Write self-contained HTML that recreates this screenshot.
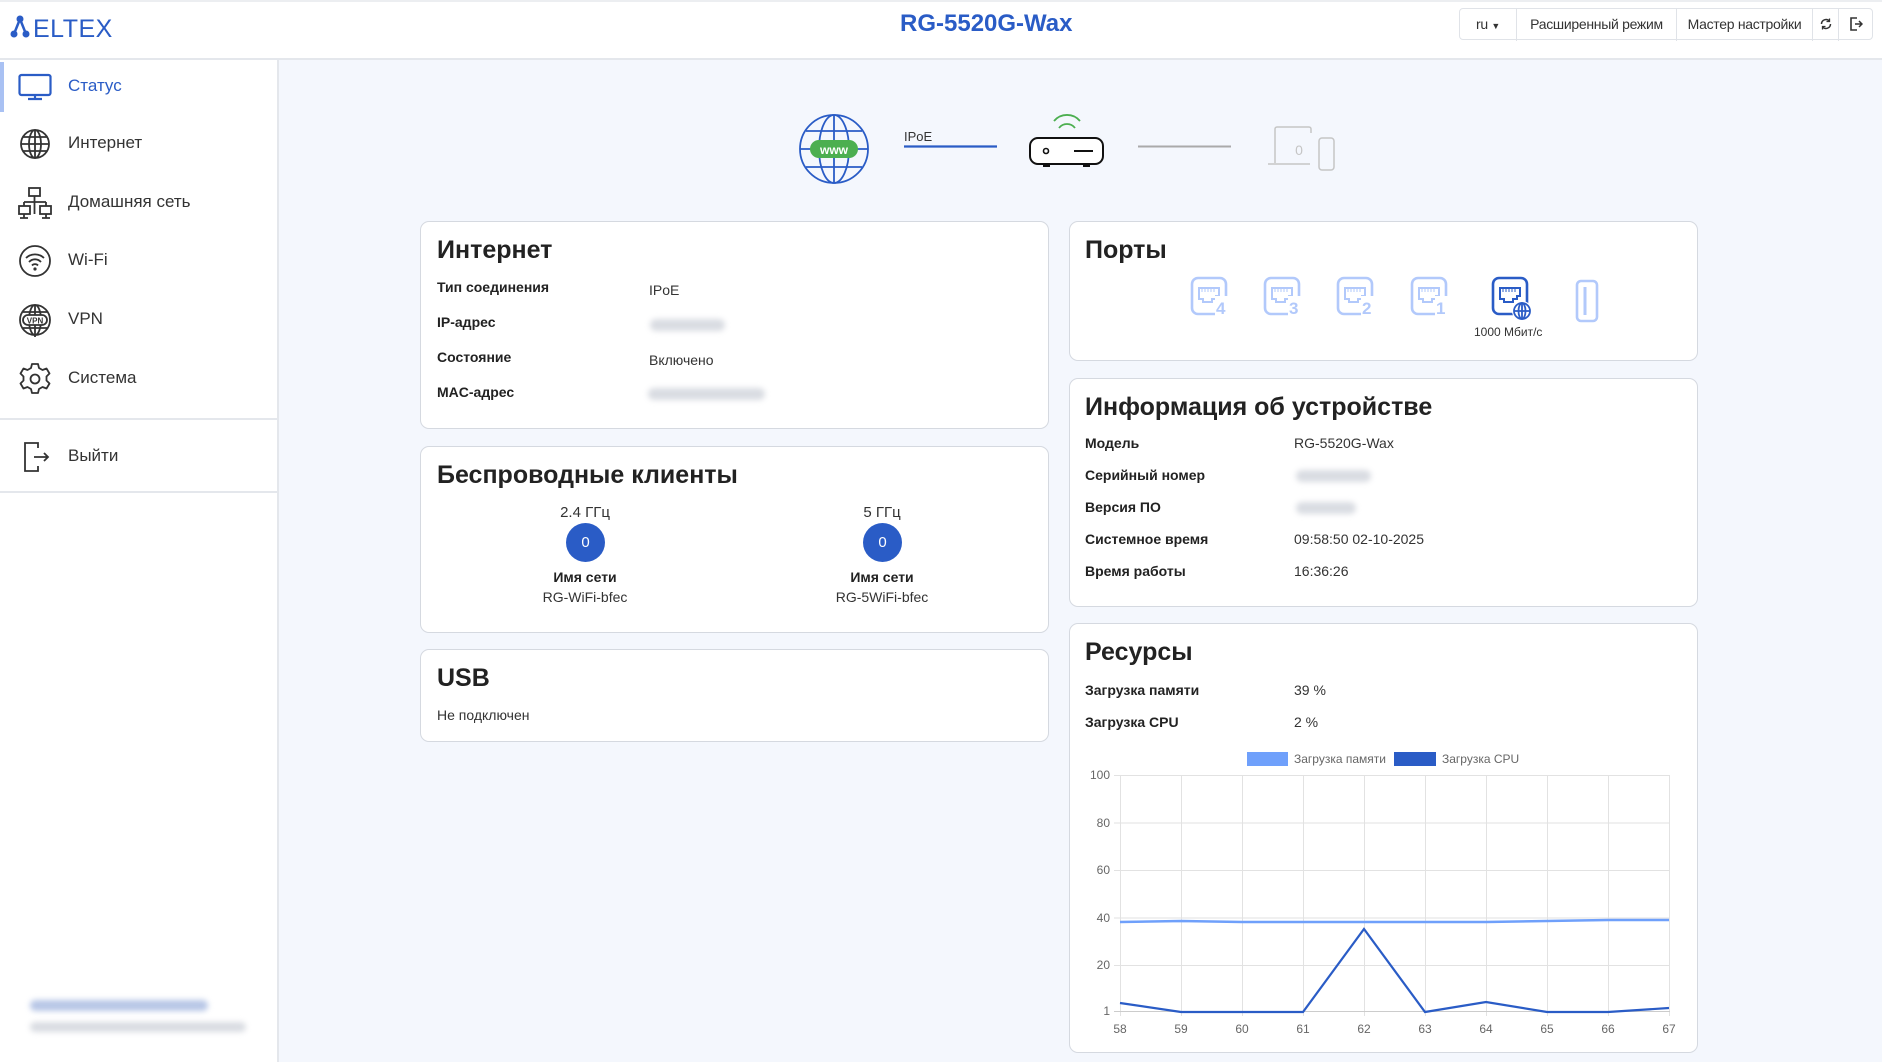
<!DOCTYPE html>
<html><head><meta charset="utf-8"><style>
*{margin:0;padding:0;box-sizing:border-box}
body{width:1882px;height:1062px;overflow:hidden;background:#f4f7fd;font-family:"Liberation Sans","DejaVu Sans",sans-serif;color:#222;position:relative}
.a{position:absolute;white-space:nowrap}
.hdr{position:absolute;left:0;top:0;width:1882px;height:60px;background:#fff;border-bottom:2px solid #e4e7ec;border-top:2px solid #eceef1}
.side{position:absolute;left:0;top:60px;width:279px;height:1002px;background:#fff;border-right:2px solid #e4e7ec}
.mi{position:absolute;left:68px;font-size:17px;color:#333}
.card{position:absolute;background:#fff;border:1.5px solid #d5d9e0;border-radius:9px}
.t{position:absolute;font-size:25px;font-weight:bold;color:#222}
.l{position:absolute;font-size:14px;font-weight:bold;color:#222}
.v{position:absolute;font-size:14px;color:#333}
.blur{position:absolute;height:12px;background:#d9dce2;border-radius:6px;filter:blur(3px)}
.btn{position:absolute;top:0;height:32px;line-height:30px;font-size:14px;letter-spacing:-0.3px;color:#333;border-left:1px solid #e0e3e8;text-align:center}
</style></head><body>
<div class="hdr"></div>
<!-- logo -->
<svg class="a" style="left:10px;top:12px" width="110" height="28" viewBox="0 0 110 28">
<circle cx="4" cy="22" r="3.5" fill="#2a5cc6"/><circle cx="10" cy="7" r="3.5" fill="#2a5cc6"/><circle cx="16" cy="22" r="3.5" fill="#2a5cc6"/>
<path d="M4 22L10 7L16 22" stroke="#2a5cc6" stroke-width="2.5" fill="none"/>
<text x="23" y="25" font-family="Liberation Sans" font-size="25" fill="#2a5cc6" letter-spacing="0.5">ELTEX</text>
</svg>
<div class="a" style="left:900px;top:10px;font-size:24px;font-weight:bold;color:#2a5cc6;width:170px;text-align:center">RG-5520G-Wax</div>
<div class="a" style="left:1459px;top:8px;width:414px;height:32px;border:1px solid #e0e3e8;border-radius:4px;background:#fff">
<div class="btn" style="left:0;width:56px;border-left:none">ru <span style="font-size:9px">▼</span></div>
<div class="btn" style="left:56px;width:160px">Расширенный режим</div>
<div class="btn" style="left:216px;width:136px">Мастер настройки</div>
<div class="btn" style="left:352px;width:26px"><svg width="14" height="14" viewBox="0 0 14 14" style="margin-top:8px"><path d="M2.5 7a4.5 4.5 0 0 1 8-2.8M11.5 7a4.5 4.5 0 0 1-8 2.8" stroke="#333" stroke-width="1.5" fill="none"/><path d="M10.5 1.5v3h-3M3.5 12.5v-3h3" stroke="#333" stroke-width="1.3" fill="none"/></svg></div>
<div class="btn" style="left:378px;width:34px"><svg width="14" height="16" viewBox="0 0 14 16" style="margin-top:7px"><path d="M8 2H2v12h6" stroke="#333" stroke-width="1.6" fill="none"/><path d="M6 8h7M10 5l3 3-3 3" stroke="#333" stroke-width="1.5" fill="none"/></svg></div>
</div>

<div class="side"></div>
<div class="a" style="left:0;top:62px;width:4px;height:50px;background:#a9c1f3"></div>
<svg class="a" style="left:18px;top:73px" width="34" height="28" viewBox="0 0 34 28"><rect x="1.5" y="2" width="31" height="20" rx="2" stroke="#2a5cc6" stroke-width="2.2" fill="none"/><path d="M17 22v4M10 26h14" stroke="#2a5cc6" stroke-width="2.2"/></svg>
<div class="mi" style="top:76px;color:#2a5cc6">Статус</div>
<svg class="a" style="left:18px;top:128px" width="34" height="32" viewBox="0 0 34 32"><g stroke="#333" stroke-width="1.8" fill="none"><circle cx="17" cy="16" r="14"/><ellipse cx="17" cy="16" rx="6" ry="14"/><path d="M17 2v28M3 16h28M5 9h24M5 23h24"/></g></svg>
<div class="mi" style="top:133px">Интернет</div>
<svg class="a" style="left:18px;top:186px" width="34" height="34" viewBox="0 0 34 34"><g stroke="#333" stroke-width="1.8" fill="none"><rect x="11" y="2" width="11" height="8"/><path d="M16.5 10v6M6 16h22M6 16v4M28 16v4"/><rect x="1" y="20" width="11" height="8"/><rect x="22" y="20" width="11" height="8"/><path d="M6 28v4M2 32h8M28 28v4M24 32h8M16.5 16v12"/></g></svg>
<div class="mi" style="top:192px">Домашняя сеть</div>
<svg class="a" style="left:18px;top:244px" width="34" height="34" viewBox="0 0 34 34"><g stroke="#333" stroke-width="1.8" fill="none"><circle cx="17" cy="17" r="15"/><path d="M8 14a13 13 0 0 1 18 0M11 18a8 8 0 0 1 12 0M14 21.5a4 4 0 0 1 6 0"/></g><circle cx="17" cy="25" r="1.6" fill="#333"/></svg>
<div class="mi" style="top:250px">Wi-Fi</div>
<svg class="a" style="left:18px;top:303px" width="34" height="34" viewBox="0 0 34 34"><g stroke="#333" stroke-width="1.8" fill="none"><circle cx="17" cy="17" r="15"/><ellipse cx="17" cy="17" rx="6" ry="15"/><path d="M17 2v32M5 9h24M5 25h24"/><rect x="5" y="12" width="24" height="10" rx="5" fill="#fff"/></g><text x="17" y="20.5" font-size="8" font-weight="bold" text-anchor="middle" fill="#333" font-family="Liberation Sans">VPN</text></svg>
<div class="mi" style="top:309px">VPN</div>
<svg class="a" style="left:18px;top:362px" width="34" height="34" viewBox="0 0 34 34"><g stroke="#333" stroke-width="1.8" fill="none"><path d="M14 2h6l1 4 3.5 2 4-1.5 3 5-3 3v4l3 3-3 5-4-1.5-3.5 2-1 4h-6l-1-4-3.5-2-4 1.5-3-5 3-3v-4l-3-3 3-5 4 1.5 3.5-2z" stroke-linejoin="round"/><circle cx="17" cy="17" r="4.5"/></g></svg>
<div class="mi" style="top:368px">Система</div>
<div class="a" style="left:0;top:418px;width:278px;height:2px;background:#e4e7ec"></div>
<svg class="a" style="left:22px;top:440px" width="30" height="34" viewBox="0 0 30 34"><g stroke="#333" stroke-width="1.8" fill="none"><path d="M16 8V3H3v28h13v-5"/><path d="M12 17h14M22 13l4 4-4 4"/></g></svg>
<div class="mi" style="top:446px">Выйти</div>
<div class="a" style="left:0;top:491px;width:278px;height:2px;background:#e4e7ec"></div>
<div class="blur" style="left:30px;top:1000px;width:178px;height:11px;background:#b7c6e6"></div>
<div class="blur" style="left:30px;top:1022px;width:216px;height:10px"></div>

<svg class="a" style="left:790px;top:100px" width="560" height="100" viewBox="790 100 560 100">
<g stroke="#2a5cc6" stroke-width="1.8" fill="none"><circle cx="834" cy="149" r="34"/><ellipse cx="834" cy="149" rx="15" ry="34"/><path d="M834 115v68M800 149h68M806 131h56M806 167h56"/></g>
<rect x="810" y="140" width="48" height="18" rx="9" fill="#4caf50"/>
<text x="834" y="154" font-size="12" font-weight="bold" fill="#fff" text-anchor="middle" font-family="Liberation Sans">www</text>
<text x="904" y="141" font-size="13" fill="#333" font-family="Liberation Sans">IPoE</text>
<path d="M904 146.5h93" stroke="#2a5cc6" stroke-width="2.2"/>
<path d="M1054 121a17 17 0 0 1 26 0M1059 128a10 10 0 0 1 16 0" stroke="#4caf50" stroke-width="1.8" fill="none"/>
<rect x="1030" y="138" width="73" height="26" rx="8" stroke="#111" stroke-width="2" fill="#fff"/>
<circle cx="1046" cy="151" r="2.5" stroke="#111" stroke-width="1.6" fill="none"/><path d="M1074 151h19" stroke="#111" stroke-width="2"/>
<rect x="1043" y="164" width="7" height="3" fill="#111"/><rect x="1083" y="164" width="7" height="3" fill="#111"/>
<path d="M1138 146.5h93" stroke="#aaa" stroke-width="2"/>
<path d="M1275 163v-34a2 2 0 0 1 2-2h32a2 2 0 0 1 2 2v4M1268 164h42" stroke="#c5c5c5" stroke-width="1.5" fill="none"/>
<rect x="1319" y="138" width="15" height="32" rx="3" stroke="#c5c5c5" stroke-width="1.5" fill="#f4f7fd"/>
<text x="1299" y="155" font-size="14" fill="#c5c5c5" text-anchor="middle" font-family="Liberation Sans">0</text>
</svg>

<div class="card" style="left:420px;top:221px;width:629px;height:208px"></div>
<div class="t" style="left:437px;top:236px">Интернет</div>
<div class="l" style="left:437px;top:279px">Тип соединения</div><div class="v" style="left:649px;top:282px">IPoE</div>
<div class="l" style="left:437px;top:314px">IP-адрес</div><div class="blur" style="left:650px;top:319px;width:75px"></div>
<div class="l" style="left:437px;top:349px">Состояние</div><div class="v" style="left:649px;top:352px">Включено</div>
<div class="l" style="left:437px;top:384px">MAC-адрес</div><div class="blur" style="left:648px;top:388px;width:117px"></div>

<div class="card" style="left:420px;top:446px;width:629px;height:187px"></div>
<div class="t" style="left:437px;top:461px">Беспроводные клиенты</div>
<div class="v" style="left:535px;top:504px;width:100px;text-align:center;font-size:15px">2.4 ГГц</div>
<div class="a" style="left:566px;top:523px;width:39px;height:39px;border-radius:50%;background:#2a5cc6;color:#fff;font-size:15px;line-height:39px;text-align:center">0</div>
<div class="l" style="left:535px;top:569px;width:100px;text-align:center">Имя сети</div>
<div class="v" style="left:515px;top:589px;width:140px;text-align:center">RG-WiFi-bfec</div>
<div class="v" style="left:832px;top:504px;width:100px;text-align:center;font-size:15px">5 ГГц</div>
<div class="a" style="left:863px;top:523px;width:39px;height:39px;border-radius:50%;background:#2a5cc6;color:#fff;font-size:15px;line-height:39px;text-align:center">0</div>
<div class="l" style="left:832px;top:569px;width:100px;text-align:center">Имя сети</div>
<div class="v" style="left:807px;top:589px;width:150px;text-align:center">RG-5WiFi-bfec</div>

<div class="card" style="left:420px;top:649px;width:629px;height:93px"></div>
<div class="t" style="left:437px;top:664px">USB</div>
<div class="v" style="left:437px;top:707px">Не подключен</div>

<div class="card" style="left:1069px;top:221px;width:629px;height:140px"></div>
<div class="t" style="left:1085px;top:236px">Порты</div>
<svg class="a" style="left:1185px;top:274px" width="430" height="50" viewBox="1185 274 430 50">
<defs><g id="p"><rect x="2" y="3" width="34" height="36" rx="6" stroke-width="2.6" fill="none"/><path d="M9 13h20v8h-3v3h-4v3h-9v-3h-4z" stroke-width="2" fill="none"/><path d="M12 13v4M15 13v4M18 13v4M21 13v4M24 13v4" stroke-width="1"/></g></defs>
<g stroke="#b2c9fb" fill="#b2c9fb">
<use href="#p" x="1190" y="275"/><use href="#p" x="1263" y="275"/><use href="#p" x="1336" y="275"/><use href="#p" x="1410" y="275"/>
<rect x="1577" y="281" width="20" height="40" rx="4" stroke-width="2.6" fill="none"/><path d="M1585 287v28" stroke-width="3"/>
</g>
<g font-family="Liberation Sans" font-weight="bold" font-size="17" fill="#b2c9fb"><rect x="1215" y="296" width="14" height="20" fill="#fff"/><text x="1216" y="314">4</text><rect x="1288" y="296" width="14" height="20" fill="#fff"/><text x="1289" y="314">3</text><rect x="1361" y="296" width="14" height="20" fill="#fff"/><text x="1362" y="314">2</text><rect x="1435" y="296" width="14" height="20" fill="#fff"/><text x="1436" y="314">1</text></g>
<g stroke="#2a5cc6" fill="#2a5cc6"><use href="#p" x="1491" y="275"/></g>
<circle cx="1522" cy="311" r="10" fill="#fff"/>
<g stroke="#2a5cc6" stroke-width="1.8" fill="none"><circle cx="1522" cy="311" r="8"/><ellipse cx="1522" cy="311" rx="3.5" ry="8"/><path d="M1514 311h16M1522 303v16"/></g>
</svg>
<div class="a" style="left:1474px;top:325px;font-size:12px;color:#333">1000 Мбит/с</div>

<div class="card" style="left:1069px;top:378px;width:629px;height:229px"></div>
<div class="t" style="left:1085px;top:393px">Информация об устройстве</div>
<div class="l" style="left:1085px;top:435px">Модель</div><div class="v" style="left:1294px;top:435px">RG-5520G-Wax</div>
<div class="l" style="left:1085px;top:467px">Серийный номер</div><div class="blur" style="left:1296px;top:470px;width:75px"></div>
<div class="l" style="left:1085px;top:499px">Версия ПО</div><div class="blur" style="left:1296px;top:502px;width:60px"></div>
<div class="l" style="left:1085px;top:531px">Системное время</div><div class="v" style="left:1294px;top:531px">09:58:50 02-10-2025</div>
<div class="l" style="left:1085px;top:563px">Время работы</div><div class="v" style="left:1294px;top:563px">16:36:26</div>

<div class="card" style="left:1069px;top:623px;width:629px;height:430px"></div>
<div class="t" style="left:1085px;top:638px">Ресурсы</div>
<div class="l" style="left:1085px;top:682px">Загрузка памяти</div><div class="v" style="left:1294px;top:682px">39 %</div>
<div class="l" style="left:1085px;top:714px">Загрузка CPU</div><div class="v" style="left:1294px;top:714px">2 %</div>
<svg class="a" style="left:1070px;top:740px" width="628" height="310" viewBox="1070 740 628 310" font-family="Liberation Sans">
<rect x="1247" y="752" width="41" height="14" fill="#6fa0fb"/><text x="1294" y="763" font-size="12" fill="#666">Загрузка памяти</text>
<rect x="1394" y="752" width="42" height="14" fill="#2a5cc6"/><text x="1442" y="763" font-size="12" fill="#666">Загрузка CPU</text>
<g stroke="#e2e2e2" stroke-width="1">
<path d="M1114 775.5h556M1114 823h556M1114 870.5h556M1114 918h556M1114 965.5h556"/>
<path d="M1120.5 775v241M1181.5 775v241M1242.5 775v241M1303.5 775v241M1364.5 775v241M1425.5 775v241M1486.5 775v241M1547.5 775v241M1608.5 775v241M1669.5 775v241"/>
</g>
<path d="M1114 1011.5h556" stroke="#ccc"/>
<g font-size="12" fill="#666" text-anchor="end"><text x="1110" y="779">100</text><text x="1110" y="827">80</text><text x="1110" y="874">60</text><text x="1110" y="922">40</text><text x="1110" y="969">20</text><text x="1110" y="1015">1</text></g>
<g font-size="12" fill="#666" text-anchor="middle"><text x="1120" y="1033">58</text><text x="1181" y="1033">59</text><text x="1242" y="1033">60</text><text x="1303" y="1033">61</text><text x="1364" y="1033">62</text><text x="1425" y="1033">63</text><text x="1486" y="1033">64</text><text x="1547" y="1033">65</text><text x="1608" y="1033">66</text><text x="1669" y="1033">67</text></g>
<polyline points="1120,922 1181,921 1242,922 1303,922 1364,922 1425,922 1486,922 1547,921 1608,920 1669,920" stroke="#6fa0fb" stroke-width="2.5" fill="none"/>
<polyline points="1120,1003 1181,1012 1242,1012 1303,1012 1364,929 1425,1012 1486,1002 1547,1012 1608,1012 1669,1008" stroke="#2a5cc6" stroke-width="2.2" fill="none"/>
</svg>
</body></html>
